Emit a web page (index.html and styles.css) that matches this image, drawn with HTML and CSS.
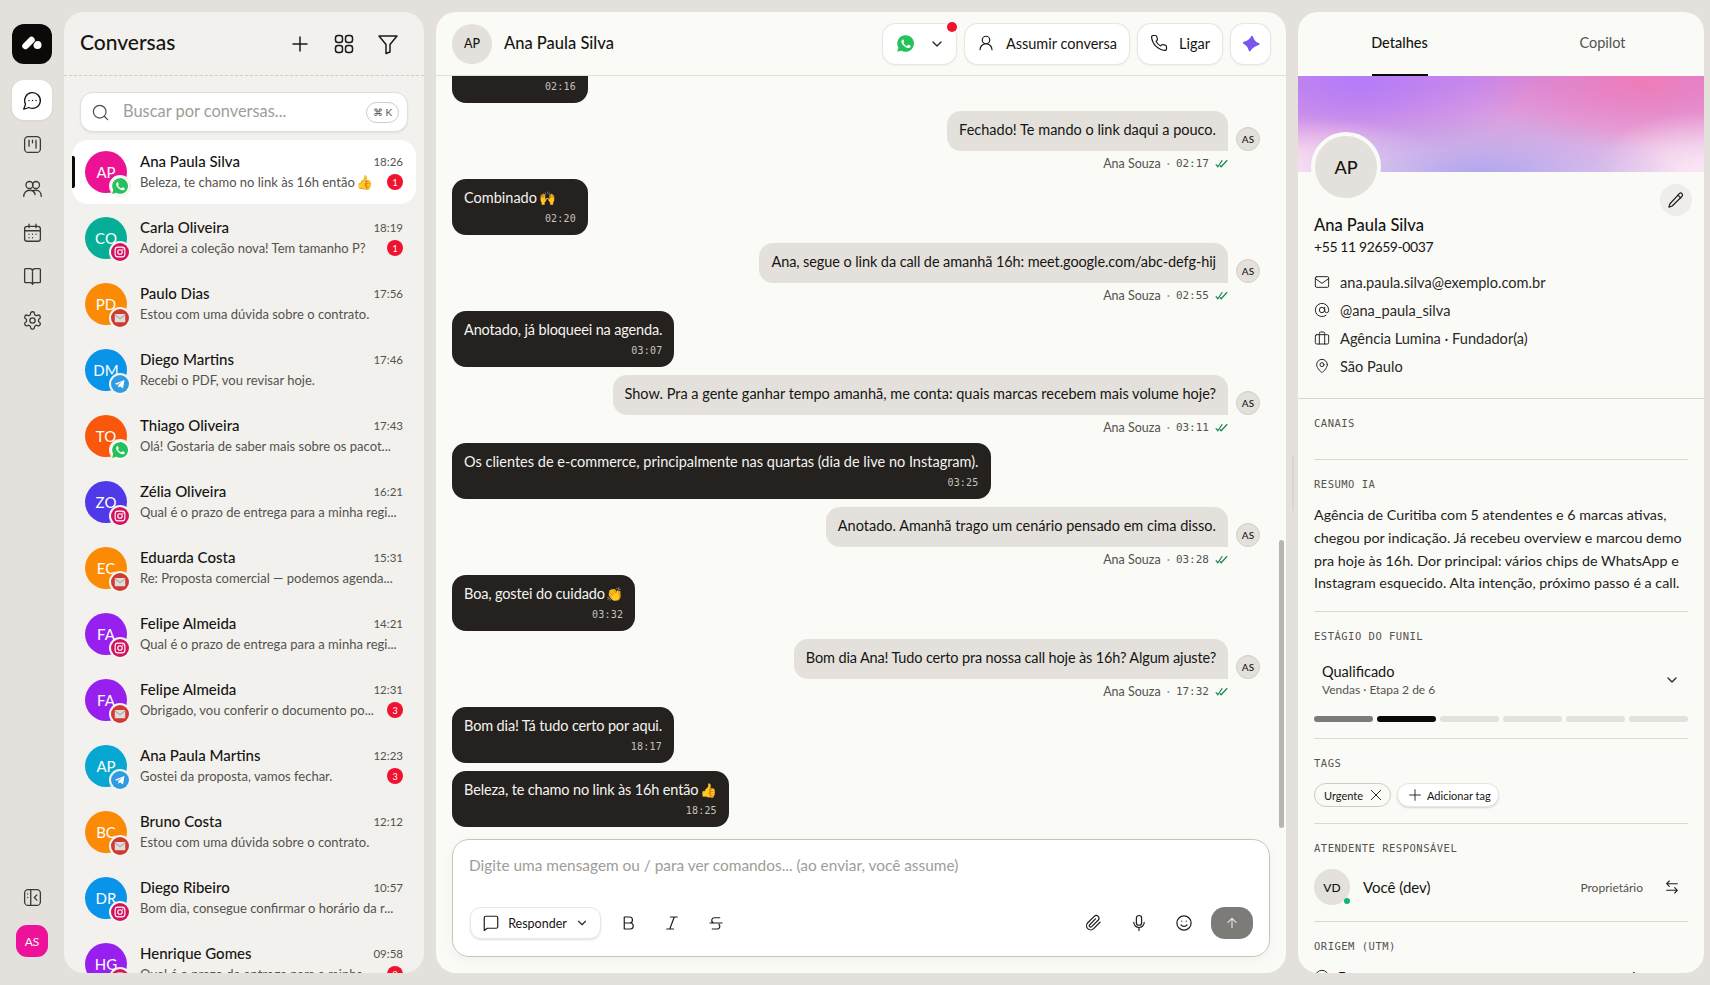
FILE: index.html
```html
<!DOCTYPE html>
<html lang="pt"><head><meta charset="utf-8"><title>Conversas</title><link rel="stylesheet" href="styles.css"></head><body>
<svg width="0" height="0" class="defs"><defs>
<symbol id="wa" viewBox="0 0 24 24"><path fill="#25c15a" d="M12 1.500a10.500 10.500 0 0 0-9 15.800L1.500 22.500l5.400-1.400A10.500 10.500 0 1 0 12 1.500z"/><path fill="#fff" d="M8.800 6.800c-.3 0-.6.100-.9.400-.6.600-1.100 1.400-1.100 2.500 0 1.400 1 2.800 1.200 3 .2.300 2 3.100 4.800 4.300 2.400.9 2.900.8 3.400.7.500-.1 1.700-.7 2-1.400.2-.7.200-1.200.100-1.400l-.6-.3-2-1c-.3-.1-.5-.1-.7.200l-.9 1.100c-.2.200-.3.200-.6.100-.3-.2-1.300-.5-2.400-1.500-.9-.8-1.500-1.700-1.600-2-.2-.3 0-.5.100-.6l.4-.5.300-.5c.1-.2.100-.3 0-.5l-.9-2.200c-.2-.4-.4-.4-.6-.4z"/></symbol>
<symbol id="ig" viewBox="0 0 24 24"><circle cx="12" cy="12" r="12" fill="#d1145f"/><rect x="5.500" y="5.500" width="13" height="13" rx="3.800" fill="none" stroke="#fff" stroke-width="1.500"/><circle cx="12" cy="12" r="3" fill="none" stroke="#fff" stroke-width="1.500"/><circle cx="15.800" cy="8.200" r=".9" fill="#fff"/></symbol>
<symbol id="gm" viewBox="0 0 24 24"><circle cx="12" cy="12" r="12" fill="#cf3a33"/><rect x="5" y="6.500" width="14" height="11" rx="1" fill="#e0dcd8"/><path d="M5 7.500l7 5.500 7-5.500" fill="none" stroke="#9c908c" stroke-width="1.200"/></symbol>
<symbol id="tg" viewBox="0 0 24 24"><circle cx="12" cy="12" r="12" fill="#2f9be0"/><path fill="#fff" d="M5 11.800l13-5.300-2 11.500-4-2.900-2 2-.5-3.500 5.800-5.100-7.300 4.400z"/></symbol>
<symbol id="chev" viewBox="0 0 24 24"><path d="M6 9l6 6 6-6" fill="none" stroke="currentColor" stroke-width="2" stroke-linecap="round" stroke-linejoin="round"/></symbol>
<symbol id="ticks" viewBox="0 0 16 12"><path d="M1 7l2.500 3L9 2M6 8.500l1.500 1.500L15 2" fill="none" stroke="#1a8452" stroke-width="1.500"/></symbol>
</defs></svg>
<div class="app">
<nav class="rail">
  <div class="logo"><svg viewBox="0 0 24 24" width="24" height="24"><circle cx="17.500" cy="13" r="4" fill="#fff"/><path d="M5.500 14L11.500 8" stroke="#0b0a09" stroke-width="8.500" stroke-linecap="round"/><path d="M5.500 14L11.500 8" stroke="#fff" stroke-width="6.500" stroke-linecap="round"/></svg></div>
  <a class="rail-btn active"><svg class="ri" viewBox="0 0 24 24"><path d="M7.900 20A9 9 0 1 0 4 16.100L2 22z"/><path d="M8 12h.01M12 12h.01M16 12h.01"/></svg></a>
  <a class="rail-btn"><svg class="ri" viewBox="0 0 24 24"><rect x="3" y="3" width="18" height="18" rx="4"/><path d="M8 7v7M12 7v3M16 7v9"/></svg></a>
  <a class="rail-btn"><svg class="ri" viewBox="0 0 24 24"><circle cx="8.500" cy="8" r="4"/><circle cx="16" cy="8" r="4"/><path d="M2 21c0-4 3-7 6.500-7s6 2 6.500 5M12 14.500c1-.5 2.500-.5 4-.5 3.500 0 6 3 6 7"/></svg></a>
  <a class="rail-btn"><svg class="ri" viewBox="0 0 24 24"><rect x="3" y="5" width="18" height="17" rx="3"/><path d="M8 2.500v4M16 2.500v4M3 10h18M8 14h.01M12 14h.01M16 14h.01M8 18h.01M12 18h.01"/></svg></a>
  <a class="rail-btn"><svg class="ri" viewBox="0 0 24 24"><path d="M12 7v14M3 18V4a1 1 0 0 1 1-1h5a3 3 0 0 1 3 3 3 3 0 0 1 3-3h5a1 1 0 0 1 1 1v14a1 1 0 0 1-1 1h-6a3 3 0 0 0-2 2 3 3 0 0 0-2-2H4a1 1 0 0 1-1-1z"/></svg></a>
  <a class="rail-btn"><svg class="ri" viewBox="0 0 24 24"><path d="M12.200 2h-.4a2 2 0 0 0-2 2v.2a2 2 0 0 1-1 1.700l-.4.300a2 2 0 0 1-2 0l-.2-.1a2 2 0 0 0-2.700.7l-.2.400a2 2 0 0 0 .7 2.700l.2.100a2 2 0 0 1 1 1.700v.5a2 2 0 0 1-1 1.700l-.2.100a2 2 0 0 0-.7 2.700l.2.400a2 2 0 0 0 2.700.7l.2-.1a2 2 0 0 1 2 0l.4.300a2 2 0 0 1 1 1.700v.2a2 2 0 0 0 2 2h.4a2 2 0 0 0 2-2v-.2a2 2 0 0 1 1-1.700l.4-.3a2 2 0 0 1 2 0l.2.100a2 2 0 0 0 2.700-.7l.2-.4a2 2 0 0 0-.7-2.700l-.2-.1a2 2 0 0 1-1-1.700v-.5a2 2 0 0 1 1-1.700l.2-.1a2 2 0 0 0 .7-2.700l-.2-.4a2 2 0 0 0-2.700-.7l-.2.100a2 2 0 0 1-2 0l-.4-.3a2 2 0 0 1-1-1.700V4a2 2 0 0 0-2-2z"/><circle cx="12" cy="12" r="3"/></svg></a>
  <div class="rail-space"></div>
  <a class="rail-btn"><svg class="ri" viewBox="0 0 24 24"><rect x="3" y="3" width="18" height="18" rx="4"/><path d="M10 3v18M6.500 8h.01M6.500 12h.01M17 9l-3 3 3 3"/></svg></a>
  <div class="me">AS</div>
</nav>

<section class="list panel">
  <header class="list-head"><h1>Conversas</h1>
    <div class="list-tools">
      <svg class="ti" viewBox="0 0 24 24"><path d="M12 5v14M5 12h14"/></svg>
      <svg class="ti" viewBox="0 0 24 24"><rect x="3.500" y="3.500" width="7" height="7" rx="2.500"/><rect x="13.500" y="3.500" width="7" height="7" rx="2.500"/><rect x="3.500" y="13.500" width="7" height="7" rx="2.500"/><rect x="13.500" y="13.500" width="7" height="7" rx="2.500"/></svg>
      <svg class="ti" viewBox="0 0 24 24"><path d="M3 4h18l-7 8.500V20l-4 1.500v-9z"/></svg>
    </div></header>
  <div class="search"><svg class="si" viewBox="0 0 24 24"><circle cx="11" cy="11" r="8"/><path d="M21 21l-4.300-4.300"/></svg><span class="ph">Buscar por conversas...</span><span class="kbd">⌘ K</span></div>
  <ul class="rows">
    <li class="row sel"><div class="av c-pink">AP<svg class="ch"><use href="#wa"/></svg></div><div class="rb"><div class="r1"><b>Ana Paula Silva</b><time>18:26</time></div><div class="r2"><p>Beleza, te chamo no link às 16h então <span class="emo">👍</span></p><i>1</i></div></div></li>
    <li class="row"><div class="av c-teal">CO<svg class="ch"><use href="#ig"/></svg></div><div class="rb"><div class="r1"><b>Carla Oliveira</b><time>18:19</time></div><div class="r2"><p>Adorei a coleção nova! Tem tamanho P?</p><i>1</i></div></div></li>
    <li class="row"><div class="av c-orange">PD<svg class="ch"><use href="#gm"/></svg></div><div class="rb"><div class="r1"><b>Paulo Dias</b><time>17:56</time></div><div class="r2"><p>Estou com uma dúvida sobre o contrato.</p></div></div></li>
    <li class="row"><div class="av c-blue">DM<svg class="ch"><use href="#tg"/></svg></div><div class="rb"><div class="r1"><b>Diego Martins</b><time>17:46</time></div><div class="r2"><p>Recebi o PDF, vou revisar hoje.</p></div></div></li>
    <li class="row"><div class="av c-red">TO<svg class="ch"><use href="#wa"/></svg></div><div class="rb"><div class="r1"><b>Thiago Oliveira</b><time>17:43</time></div><div class="r2"><p>Olá! Gostaria de saber mais sobre os pacot...</p></div></div></li>
    <li class="row"><div class="av c-indigo">ZO<svg class="ch"><use href="#ig"/></svg></div><div class="rb"><div class="r1"><b>Zélia Oliveira</b><time>16:21</time></div><div class="r2"><p>Qual é o prazo de entrega para a minha regi...</p></div></div></li>
    <li class="row"><div class="av c-orange">EC<svg class="ch"><use href="#gm"/></svg></div><div class="rb"><div class="r1"><b>Eduarda Costa</b><time>15:31</time></div><div class="r2"><p>Re: Proposta comercial — podemos agenda...</p></div></div></li>
    <li class="row"><div class="av c-purple">FA<svg class="ch"><use href="#ig"/></svg></div><div class="rb"><div class="r1"><b>Felipe Almeida</b><time>14:21</time></div><div class="r2"><p>Qual é o prazo de entrega para a minha regi...</p></div></div></li>
    <li class="row"><div class="av c-purple">FA<svg class="ch"><use href="#gm"/></svg></div><div class="rb"><div class="r1"><b>Felipe Almeida</b><time>12:31</time></div><div class="r2"><p>Obrigado, vou conferir o documento po...</p><i>3</i></div></div></li>
    <li class="row"><div class="av c-cyan">AP<svg class="ch"><use href="#tg"/></svg></div><div class="rb"><div class="r1"><b>Ana Paula Martins</b><time>12:23</time></div><div class="r2"><p>Gostei da proposta, vamos fechar.</p><i>3</i></div></div></li>
    <li class="row"><div class="av c-orange">BC<svg class="ch"><use href="#gm"/></svg></div><div class="rb"><div class="r1"><b>Bruno Costa</b><time>12:12</time></div><div class="r2"><p>Estou com uma dúvida sobre o contrato.</p></div></div></li>
    <li class="row"><div class="av c-blue">DR<svg class="ch"><use href="#ig"/></svg></div><div class="rb"><div class="r1"><b>Diego Ribeiro</b><time>10:57</time></div><div class="r2"><p>Bom dia, consegue confirmar o horário da r...</p></div></div></li>
    <li class="row"><div class="av c-purple">HG<svg class="ch"><use href="#ig"/></svg></div><div class="rb"><div class="r1"><b>Henrique Gomes</b><time>09:58</time></div><div class="r2"><p>Qual é o prazo de entrega para a minha...</p><i>2</i></div></div></li>
  </ul>
</section>

<main class="chat panel">
  <header class="chat-head">
    <div class="chat-av">AP</div><h2>Ana Paula Silva</h2><div class="grow"></div>
    <button class="btn chan"><svg class="wa-ic"><use href="#wa"/></svg><svg class="chev"><use href="#chev"/></svg><span class="dot"></span></button>
    <button class="btn"><svg class="bi" viewBox="0 0 24 24"><circle cx="12" cy="8" r="5"/><path d="M4 21c0-4.500 3.500-8 8-8s8 3.500 8 8"/></svg>Assumir conversa</button>
    <button class="btn"><svg class="bi" viewBox="0 0 24 24"><path d="M22 16.900v3a2 2 0 0 1-2.200 2A19.800 19.800 0 0 1 2.100 4.200 2 2 0 0 1 4.100 2h3a2 2 0 0 1 2 1.700c.1 1 .4 1.900.7 2.800a2 2 0 0 1-.5 2.100L8.100 9.900a16 16 0 0 0 6 6l1.300-1.300a2 2 0 0 1 2.100-.4c.9.300 1.800.6 2.800.7a2 2 0 0 1 1.700 2z"/></svg>Ligar</button>
    <button class="btn spark"><svg viewBox="0 0 24 24" width="20" height="20"><path fill="#7a55f0" stroke="#7a55f0" stroke-width="2.500" stroke-linejoin="round" d="M13.200 3.500Q15 10 21 12 14 14 10.500 19.500 9 13 3.500 10.500 11 9 13.200 3.500z"/></svg></button>
  </header>
  <div class="msgs">
    <div class="in"><div class="bub-in"><p>Perfeito!</p><time>02:16</time></div></div>
    <div class="out"><div class="oc"><div class="bub-out">Fechado! Te mando o link daqui a pouco.</div><div class="meta">Ana Souza <em>·</em> <time>02:17</time> <svg class="tk"><use href="#ticks"/></svg></div></div><span class="as">AS</span></div>
    <div class="in"><div class="bub-in"><p>Combinado <span class="emo">🙌</span></p><time>02:20</time></div></div>
    <div class="out"><div class="oc"><div class="bub-out narrow-s">Ana, segue o link da call de amanhã 16h: meet.google.com/abc-defg-hij</div><div class="meta">Ana Souza <em>·</em> <time>02:55</time> <svg class="tk"><use href="#ticks"/></svg></div></div><span class="as">AS</span></div>
    <div class="in"><div class="bub-in narrow"><p>Anotado, já bloqueei na agenda.</p><time>03:07</time></div></div>
    <div class="out"><div class="oc"><div class="bub-out">Show. Pra a gente ganhar tempo amanhã, me conta: quais marcas recebem mais volume hoje?</div><div class="meta">Ana Souza <em>·</em> <time>03:11</time> <svg class="tk"><use href="#ticks"/></svg></div></div><span class="as">AS</span></div>
    <div class="in"><div class="bub-in"><p>Os clientes de e-commerce, principalmente nas quartas (dia de live no Instagram).</p><time>03:25</time></div></div>
    <div class="out"><div class="oc"><div class="bub-out">Anotado. Amanhã trago um cenário pensado em cima disso.</div><div class="meta">Ana Souza <em>·</em> <time>03:28</time> <svg class="tk"><use href="#ticks"/></svg></div></div><span class="as">AS</span></div>
    <div class="in"><div class="bub-in narrow"><p>Boa, gostei do cuidado <span class="emo">👏</span></p><time>03:32</time></div></div>
    <div class="out"><div class="oc"><div class="bub-out narrow">Bom dia Ana! Tudo certo pra nossa call hoje às 16h? Algum ajuste?</div><div class="meta">Ana Souza <em>·</em> <time>17:32</time> <svg class="tk"><use href="#ticks"/></svg></div></div><span class="as">AS</span></div>
    <div class="in"><div class="bub-in narrow"><p>Bom dia! Tá tudo certo por aqui.</p><time>18:17</time></div></div>
    <div class="in"><div class="bub-in narrow"><p>Beleza, te chamo no link às 16h então <span class="emo">👍</span></p><time>18:25</time></div></div>
  </div>
  <div class="scroll"></div>
  <div class="composer">
    <div class="cph">Digite uma mensagem ou / para ver comandos... (ao enviar, você assume)</div>
    <div class="ctools">
      <button class="reply"><svg class="ci" viewBox="0 0 24 24"><path d="M3 5a2 2 0 0 1 2-2h14a2 2 0 0 1 2 2v12a2 2 0 0 1-2 2H7l-4 3z"/></svg>Responder<svg class="chev small"><use href="#chev"/></svg></button>
      <svg class="ci fmt" viewBox="0 0 24 24"><path d="M7 4h7a4 4 0 0 1 0 8H7zM7 12h8a4 4 0 0 1 0 8H7z"/></svg>
      <svg class="ci fmt" viewBox="0 0 24 24"><path d="M10 4h9M5 20h9M15 4L9 20"/></svg>
      <svg class="ci fmt" viewBox="0 0 24 24"><path d="M17 5H10a3.500 3.500 0 0 0-2 6.500M4 12h16M16 14a3.500 3.500 0 0 1-2 6H7"/></svg>
      <div class="grow"></div>
      <svg class="ci act" viewBox="0 0 24 24"><path d="M20 11l-8.500 8.500a5.500 5.500 0 0 1-7.800-7.800l8.600-8.600a3.600 3.600 0 0 1 5.200 5.200l-8.600 8.600a1.800 1.800 0 0 1-2.600-2.600L14 6.500"/></svg>
      <svg class="ci act" viewBox="0 0 24 24"><rect x="8.500" y="2" width="7" height="13" rx="3.500"/><path d="M5 11a7 7 0 0 0 14 0M12 18v4"/></svg>
      <svg class="ci act" viewBox="0 0 24 24"><circle cx="12" cy="12" r="9.500"/><path d="M8 14.500s1.500 2 4 2 4-2 4-2M9 9.500h.01M15 9.500h.01"/></svg>
      <button class="send"><svg viewBox="0 0 24 24" width="16" height="16"><path d="M12 19V5M6 11l6-6 6 6" fill="none" stroke="#e8e8e6" stroke-width="1.600" stroke-linecap="round" stroke-linejoin="round"/></svg></button>
    </div>
  </div>
</main>

<aside class="side panel">
  <div class="tabs"><span class="tab on">Detalhes</span><span class="tab">Copilot</span></div>
  <div class="cover"></div>
  <div class="profile">
    <div class="pav">AP</div>
    <button class="edit"><svg class="ci" viewBox="0 0 24 24"><path d="M16.500 3.500a2.400 2.400 0 0 1 3.500 3.500L7 20l-4.500 1.500L4 17z"/><path d="M14.500 5.500l4 4"/></svg></button>
    <h3>Ana Paula Silva</h3><div class="phone">+55 11 92659-0037</div>
    <ul class="facts">
      <li><svg class="fi" viewBox="0 0 24 24"><rect x="2" y="4" width="20" height="16" rx="2"/><path d="M2 7l10 7 10-7"/></svg>ana.paula.silva@exemplo.com.br</li>
      <li><svg class="fi" viewBox="0 0 24 24"><circle cx="12" cy="12" r="4"/><path d="M16 8v5a3 3 0 0 0 6 0v-1a10 10 0 1 0-4 8"/></svg>@ana_paula_silva</li>
      <li><svg class="fi" viewBox="0 0 24 24"><rect x="2" y="7" width="20" height="14" rx="2"/><path d="M8 21V5a2 2 0 0 1 2-2h4a2 2 0 0 1 2 2v16"/></svg>Agência Lumina · Fundador(a)</li>
      <li><svg class="fi" viewBox="0 0 24 24"><path d="M20 10c0 6-8 12-8 12s-8-6-8-12a8 8 0 0 1 16 0z"/><circle cx="12" cy="10" r="3"/></svg>São Paulo</li>
    </ul>
  </div>
  <div class="sec"><h4>CANAIS</h4><div class="canais"></div></div>
  <div class="sec"><h4>RESUMO IA</h4><p class="sum">Agência de Curitiba com 5 atendentes e 6 marcas ativas, chegou por indicação. Já recebeu overview e marcou demo pra hoje às 16h. Dor principal: vários chips de WhatsApp e Instagram esquecido. Alta intenção, próximo passo é a call.</p></div>
  <div class="sec"><h4>ESTÁGIO DO FUNIL</h4>
    <div class="stage"><div><div class="st">Qualificado</div><div class="ss">Vendas · Etapa 2 de 6</div></div><svg class="chev"><use href="#chev"/></svg></div>
    <div class="bars"><span class="done"></span><span class="cur"></span><span></span><span></span><span></span><span></span></div></div>
  <div class="sec"><h4>TAGS</h4><div class="tags"><span class="tag">Urgente<svg class="xi" viewBox="0 0 24 24"><path d="M5 5l14 14M19 5L5 19"/></svg></span><span class="tag add"><svg class="xi" viewBox="0 0 24 24"><path d="M12 4v16M4 12h16"/></svg>Adicionar tag</span></div></div>
  <div class="sec"><h4>ATENDENTE RESPONSÁVEL</h4><div class="agent"><div class="vd">VD<span class="on-dot"></span></div><span class="an">Você (dev)</span><div class="grow"></div><span class="role">Proprietário</span><svg class="ci sw" viewBox="0 0 24 24"><path d="M8 3L4 7l4 4M4 7h16M16 13l4 4-4 4M20 17H4"/></svg></div></div>
  <div class="sec"><h4>ORIGEM (UTM)</h4><div class="utm"><svg class="fi" viewBox="0 0 24 24"><circle cx="12" cy="12" r="10"/></svg><span>Fonte</span><div class="grow"></div><span>instagram</span></div></div>
</aside>
<span class="handle"></span>
</div>
</body></html>
```
FILE: styles.css
```css
*{box-sizing:border-box;margin:0;padding:0}
html,body{height:100%;overflow:hidden}
body{background:#e4e1dc;font-family:"Lato","Noto Sans",sans-serif;color:#161513;-webkit-font-smoothing:antialiased}
.defs{position:absolute}
ul{list-style:none}
button{font:inherit;color:inherit;background:none;border:0}
.grow,.rail-space{flex:1}
.emo{font-size:13.500px;line-height:1;margin-left:-2px}
.narrow{letter-spacing:-.14px}
.narrow-s{letter-spacing:-.09px}
.app{display:flex;height:985px;padding:12px 6px 12px 0;position:relative}
.panel{border-radius:20px;overflow:hidden}
.handle{position:absolute;left:1292px;top:455px;width:2px;height:56px;background:#d9d6d0;border-radius:1px}
.rail{width:64px;flex:none;display:flex;flex-direction:column;align-items:center;padding-top:12px}
.logo{width:40px;height:40px;border-radius:12px;background:#0b0a09;display:flex;align-items:center;justify-content:center;margin-bottom:16px}
.rail-btn{width:40px;height:40px;border-radius:12px;display:flex;align-items:center;justify-content:center;margin-bottom:4px}
.rail-btn.active{background:#fff;box-shadow:0 1px 3px rgba(0,0,0,.06)}
.ri{width:21px;height:21px;fill:none;stroke:#3b3936;stroke-width:1.500;stroke-linecap:round;stroke-linejoin:round}
.rail-btn.active .ri{stroke:#141312}
.me{width:32px;height:32px;border-radius:11px;background:#ee1199;color:#fff;font-size:12px;display:flex;align-items:center;justify-content:center;margin:4px 0 16px;flex:none}
.list{width:360px;flex:none;background:#f2f1ed;display:flex;flex-direction:column}
.list-head{height:64px;flex:none;display:flex;align-items:center;justify-content:space-between;padding:0 24px 0 16px;border-bottom:1px dashed #cfccc6}
h1{font-size:21px;font-weight:500;padding-bottom:4px}
.list-tools{display:flex;gap:20px}
.ti{width:24px;height:24px;fill:none;stroke:#1b1a18;stroke-width:1.500;stroke-linecap:round;stroke-linejoin:round}
.search{margin:16px 16px 8px;height:40px;flex:none;background:#fff;border:1px solid #e2dfda;border-radius:13px;display:flex;align-items:center;padding:0 8px 0 10px;box-shadow:0 1px 2px rgba(0,0,0,.08)}
.si{width:19px;height:19px;fill:none;stroke:#4c4a47;stroke-width:1.500;stroke-linecap:round;flex:none}
.ph{margin-left:13px;font-size:16.400px;color:#a09d98;flex:1;padding-bottom:3px}
.kbd{width:33px;height:21px;border:1px solid #cfccc6;border-radius:11px;font-size:10px;color:#55524e;display:flex;align-items:center;justify-content:center;white-space:nowrap}
.rows{padding:0 8px;flex:1;overflow:hidden}
.row{height:64px;margin-bottom:2px;display:flex;align-items:center;padding:0 13px;position:relative;border-radius:16px;gap:13px}
.row.sel{background:#fff}
.row.sel::before{content:"";position:absolute;left:0;top:16px;width:3px;height:32px;background:#0b0a09;border-radius:0 2px 2px 0}
.av{width:42px;height:42px;border-radius:50%;position:relative;color:#fff;font-size:15px;flex:none;display:flex;align-items:center;justify-content:center}
.ch{position:absolute;right:-4px;bottom:-4px;width:22px;height:22px;background:#fff;border-radius:50%;overflow:visible;border:2px solid #f5f4f1}
.c-pink{background:#ec1293}.c-teal{background:#07ae97}.c-orange{background:#fb8b05}.c-blue{background:#0994ea}.c-red{background:#f9570b}.c-indigo{background:#4f39e8}.c-purple{background:#9820ee}.c-cyan{background:#06a8d2}
.rb{flex:1;min-width:0;padding-bottom:1px}
.r1{display:flex;justify-content:space-between;align-items:center;height:21px}
.r1 b{font-weight:500;font-size:15px}
.r1 time{font-size:11.500px;color:#55524e}
.r2{display:flex;align-items:center;justify-content:space-between;height:21px}
.r2 p{font-size:13px;color:#55524e;white-space:nowrap;flex:1;min-width:0}
.r2 i{font-style:normal;flex:none;margin-left:8px;width:16px;height:16px;border-radius:50%;background:#f0132f;color:#fff;font-size:9px;display:flex;align-items:center;justify-content:center}
.chat{width:850px;flex:none;margin-left:12px;background:#fafaf7;display:flex;flex-direction:column;position:relative}
.chat-head{height:64px;flex:none;display:flex;align-items:center;gap:9px;padding:0 16px;border-bottom:1px solid #e4e1dc}
.chat-av{width:40px;height:40px;border-radius:50%;background:#e4e1dc;font-size:12.500px;font-weight:500;display:flex;align-items:center;justify-content:center;margin-right:3px;flex:none}
h2{font-size:16.500px;font-weight:500;padding-bottom:2px}
.btn{height:40px;border-radius:13px;background:#fff;box-shadow:0 0 0 1px #e8e6e1,0 1px 3px rgba(0,0,0,.1);display:flex;align-items:center;gap:11px;padding:0 12px 1px;font-size:14.500px;position:relative;flex:none}
.chan{width:73px;padding:0 13px;gap:14px}
.wa-ic{width:19px;height:19px;flex:none}
.chev{width:16px;height:16px;color:#2b2a28;flex:none}
.chev.small{width:14px;height:14px}
.dot{position:absolute;right:-1px;top:-2px;width:10px;height:10px;border-radius:50%;background:#f0122d}
.bi{width:18px;height:18px;fill:none;stroke:#1b1a18;stroke-width:1.600;stroke-linecap:round;stroke-linejoin:round;flex:none}
.spark{width:39px;justify-content:center;padding:0}
.msgs{flex:1;min-height:0;overflow:hidden;display:flex;flex-direction:column;justify-content:flex-end;padding:0 16px 12px;gap:8px}
.in{display:flex;flex:none}
.bub-in{background:#24211f;color:#f5f4f0;border-radius:14px;padding:8px 12px;font-size:14.500px;display:flex;flex-direction:column;min-width:136px;height:56px}
.bub-in p{line-height:22px;white-space:nowrap}
.bub-in time{align-self:flex-end;font-family:"DejaVu Sans Mono",monospace;font-size:10px;color:#c6c3be;line-height:16px;margin-top:2px;letter-spacing:.2px}
.out{display:flex;justify-content:flex-end;flex:none;gap:8px;padding-right:10px}
.oc{display:flex;flex-direction:column;align-items:flex-end}
.bub-out{background:#e4e1dc;border-radius:14px 14px 0 14px;padding:0 12px;height:40px;line-height:38px;font-size:14.500px;white-space:nowrap}
.meta{font-size:12.500px;color:#55524e;height:20px;display:flex;align-items:center;gap:6px;padding-top:4px}
.meta em{font-style:normal;color:#a09d98}
.meta time{font-family:"DejaVu Sans Mono",monospace;font-size:11px}
.tk{width:13px;height:11px}
.as{width:24px;height:24px;border-radius:50%;background:#e4e1dc;border:1px solid #d2cfc9;font-size:10px;font-weight:500;display:flex;align-items:center;justify-content:center;margin-top:16px;flex:none}
.scroll{position:absolute;right:2px;top:528px;width:5px;height:288px;background:#b8b6b1;border-radius:3px}
.composer{flex:none;margin:0 16px 16px;height:118px;background:#fff;border:1px solid #c8c5be;border-radius:17px;padding:0 16px 0 17px;display:flex;flex-direction:column;box-shadow:0 4px 12px rgba(0,0,0,.04)}
.cph{margin:15px 0 0 -1px;font-size:15.400px;line-height:20px;color:#a09d98;flex:none}
.ctools{margin-top:32px;display:flex;align-items:center;height:32px}
.reply{height:32px;width:131px;flex:none;border-radius:11px;border:1px solid #ece9e4;box-shadow:0 1px 2px rgba(0,0,0,.12);display:flex;align-items:center;justify-content:center;gap:8px;font-size:12.500px;margin-right:18px;background:#fff}
.ci{width:18px;height:18px;fill:none;stroke:#1f1e1c;stroke-width:1.600;stroke-linecap:round;stroke-linejoin:round;flex:none}
.fmt{margin-right:26px}
.act{margin-right:27px}
.send{width:42px;height:32px;border-radius:14px;background:#7c7b78;display:flex;align-items:center;justify-content:center;margin-left:-9px;flex:none}
.side{flex:1;margin-left:12px;background:#fafaf7;display:flex;flex-direction:column}
.tabs{height:64px;flex:none;display:flex}
.tab{width:203px;display:flex;align-items:center;justify-content:center;font-size:14.500px;color:#55524e;position:relative;padding-bottom:3px}
.tab.on{color:#161513;font-weight:500}
.tab.on::after{content:"";position:absolute;bottom:0;left:74px;width:56px;height:2px;background:#0b0a09}
.cover{height:96px;flex:none;background:radial-gradient(200px 70px at 45% 108%,rgba(168,160,238,.95),rgba(168,160,238,0) 100%),radial-gradient(110px 60px at 100% 100%,#fbe8f4,rgba(251,232,244,0) 100%),radial-gradient(170px 55px at 0% 100%,#fbe4f2,rgba(251,228,242,0) 100%),radial-gradient(170px 80px at 15% 5%,#b37bf8,rgba(179,123,248,0) 100%),radial-gradient(170px 70px at 85% 5%,#ef7cb8,rgba(239,124,184,0) 100%),linear-gradient(180deg,#d08be4 0%,#e3a8de 55%,#f0cdea 100%)}
.profile{flex:none;position:relative;padding:32px 16px 0;border-bottom:1px solid #d8d5cf;height:227px}
.pav{position:absolute;left:13px;top:-40px;width:70px;height:70px;border-radius:50%;background:#e4e1dc;border:4px solid #fafaf7;display:flex;align-items:center;justify-content:center;font-size:18px;font-weight:500}
.edit{position:absolute;right:12px;top:12px;width:32px;height:32px;border-radius:50%;background:#eeede9;display:flex;align-items:center;justify-content:center}
h3{font-size:16.500px;font-weight:500;line-height:22px;margin-top:10px}
.phone{font-size:14px;line-height:22px;letter-spacing:-.4px}
.facts{margin-top:10px}
.facts li{display:flex;align-items:center;gap:10px;height:28px;font-size:14.600px;color:#2a2926}
.fi{width:16px;height:16px;fill:none;stroke:#2a2926;stroke-width:1.500;stroke-linecap:round;stroke-linejoin:round;flex:none}
.sec{margin:0 16px;padding:16px 0;border-bottom:1px solid #dcd9d3;flex:none}
.sec:last-child{border:0;padding-bottom:0}
h4{font-family:"DejaVu Sans Mono",monospace;font-size:10.500px;font-weight:400;color:#55524e;letter-spacing:.5px;line-height:16px}
.canais{height:12px}
.sum{font-size:14.300px;line-height:22.800px;margin-top:12px;color:#1f1e1c}
.stage{display:flex;align-items:center;justify-content:space-between;padding:18px 8px 18px}
.st{font-size:14.500px;line-height:20px}
.ss{font-size:12px;color:#55524e;line-height:16px}
.bars{display:flex;gap:4px}
.bars span{flex:1;height:6px;border-radius:3px;background:#e4e1dc}
.bars .done{background:#7c7b78}.bars .cur{background:#0b0a09}
.tags{display:flex;gap:6px;margin-top:12px}
.tag{height:24px;border:1px solid #cfccc6;border-radius:12px;display:flex;align-items:center;gap:5px;padding:0 6px 0 9px;font-size:11px}
.tag.add{background:#fff;border-color:#e8e6e1;box-shadow:0 1px 2px rgba(0,0,0,.15);gap:4px;padding-right:7px}
.xi{width:16px;height:16px;fill:none;stroke:#1f1e1c;stroke-width:1.400;stroke-linecap:round;flex:none}
.agent{display:flex;align-items:center;margin-top:13px;height:36px}
.vd{width:36px;height:36px;border-radius:50%;background:#e4e1dc;font-size:12px;font-weight:500;display:flex;align-items:center;justify-content:center;position:relative;margin-right:13px;flex:none}
.on-dot{position:absolute;right:0;bottom:1px;width:6px;height:6px;background:#0fb872;border-radius:50%}
.an{font-size:15px}
.role{font-size:12px;color:#55524e;margin-right:21px}
.sw{margin-right:8px;width:16px;height:16px}
.utm{display:flex;align-items:center;gap:8px;font-size:13px;margin-top:15px}
```
